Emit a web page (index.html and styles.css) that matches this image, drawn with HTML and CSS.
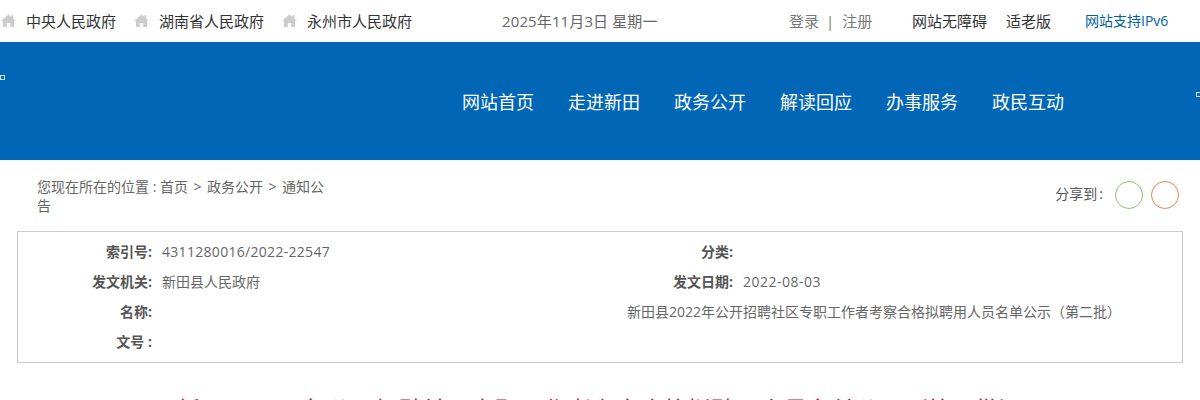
FILE: index.html
```html
<!DOCTYPE html>
<html lang="zh-CN">
<head>
<meta charset="utf-8">
<title>新田县2022年公开招聘社区专职工作者考察合格拟聘用人员名单公示（第二批）</title>
<link rel="stylesheet" href="styles.css">
</head>
<body>
<header class="topbar">
  <nav class="gov-links">
    <a class="gov-link"><svg class="home" viewBox="0 0 15 13"><path d="M7.5 0.5 L10.5 3.1 V1.2 H12.5 V4.9 L15 7.1 H13 V13 H9.2 V9 H5.8 V13 H2 V7.1 H0 Z"/></svg>中央人民政府</a>
    <a class="gov-link"><svg class="home" viewBox="0 0 15 13"><path d="M7.5 0.5 L10.5 3.1 V1.2 H12.5 V4.9 L15 7.1 H13 V13 H9.2 V9 H5.8 V13 H2 V7.1 H0 Z"/></svg>湖南省人民政府</a>
    <a class="gov-link"><svg class="home" viewBox="0 0 15 13"><path d="M7.5 0.5 L10.5 3.1 V1.2 H12.5 V4.9 L15 7.1 H13 V13 H9.2 V9 H5.8 V13 H2 V7.1 H0 Z"/></svg>永州市人民政府</a>
  </nav>
  <div class="date">2025年11月3日 星期一</div>
  <div class="login"><a>登录</a><span class="sep">|</span><a>注册</a></div>
  <a class="tool first">网站无障碍</a>
  <a class="tool">适老版</a>
  <a class="ipv6">网站支持IPv6</a>
</header>
<section class="banner">
  <span class="broken left"></span>
  <nav class="mainnav">
    <a>网站首页</a><a>走进新田</a><a>政务公开</a><a>解读回应</a><a>办事服务</a><a>政民互动</a>
  </nav>
  <span class="broken right"></span>
</section>
<main class="content">
  <div class="crumbrow">
    <div class="crumbs">您现在所在的位置 : 首页<span class="gt">&gt;</span>政务公开<span class="gt">&gt;</span>通知公告</div>
    <div class="share">
      <span class="share-label">分享到<span class="colon">:</span></span>
      <span class="circle green"></span>
      <span class="circle orange"></span>
    </div>
  </div>
  <div class="meta">
    <div class="meta-row">
      <div class="cell"><b>索引号:</b><span class="num">4311280016/2022-22547</span></div>
      <div class="cell"><b>分类:</b></div>
    </div>
    <div class="meta-row">
      <div class="cell"><b>发文机关:</b><span>新田县人民政府</span></div>
      <div class="cell"><b>发文日期:</b><span class="num wide">2022-08-03</span></div>
    </div>
    <div class="meta-row">
      <div class="cell"><b>名称:</b></div>
      <div class="cell name-value">新田县2022年公开招聘社区专职工作者考察合格拟聘用人员名单公示（第二批）</div>
    </div>
    <div class="meta-row">
      <div class="cell"><b>文号 :</b></div>
    </div>
  </div>
  <h1 class="title">新田县2022年公开招聘社区专职工作者考察合格拟聘用人员名单公示（第二批）</h1>
</main>
</body>
</html>
```
FILE: styles.css
```css
* { box-sizing: border-box; }
html, body { margin: 0; padding: 0; height: 400px; overflow: hidden; background: #fff; }
body { font-family: "Open Sans", "Noto Sans CJK SC", sans-serif; color: #333; }
a { color: inherit; text-decoration: none; }

.topbar { display: flex; align-items: center; height: 42px; padding-bottom: 2px; font-size: 15px; color: #333; white-space: nowrap; }
.gov-links { display: flex; width: 412px; flex: none; padding-left: 1px; }
.gov-link { display: flex; align-items: center; margin-right: 18px; }
.home { width: 15px; height: 13px; margin-right: 10px; fill: #ccc; }
.date { width: 287px; flex: none; margin-left: 90px; color: #666; letter-spacing: .12px; }
.login { width: 123px; flex: none; color: #777; }
.sep { margin: 0 8px 0 7px; }
.tool { margin-right: 19px; }
.ipv6 { margin-left: 15px; font-size: 14px; color: #00629f; }

.banner { position: relative; height: 118px; background: #0066b5; }
.mainnav { display: flex; gap: 34px; padding: 47px 0 0 462px; font-size: 18px; line-height: 26px; color: #fff; }
.broken { position: absolute; width: 5px; height: 5px; border: 1px solid #cfe0ee; }
.broken.left { left: 0; top: 33px; }
.broken.right { right: -1px; top: 50px; }

.content { padding: 0 17px; border-top: 1px solid #eafafd; }
.crumbrow { display: flex; justify-content: space-between; height: 70px; padding: 16px 0 0 20px; }
.crumbs { width: 300px; font-size: 14px; line-height: 19px; color: #666; }
.gt { margin: 0 5.5px; }
.share { display: flex; align-items: flex-start; padding: 4px 4px 0 0; font-size: 14px; color: #555; }
.share-label { line-height: 26px; margin-right: 12px; }
.colon { margin-left: 2px; }
.circle { width: 28px; height: 28px; border-radius: 50%; border: 1px solid; margin-right: 8px; }
.circle:last-child { margin-right: 0; }
.green { border-color: #8bc46f; }
.orange { border-color: #ee8052; }

.meta { height: 132px; border: 1px solid #ccc; padding: 4px 0 6px; font-size: 14px; color: #666; }
.meta-row { display: grid; grid-template-columns: 581px 1fr; height: 30px; }
.cell { display: flex; align-items: center; }
.cell b { width: 134px; text-align: right; margin-right: 10px; color: #555; font-weight: 700; }
.num { letter-spacing: .3px; }
.num.wide { letter-spacing: .5px; }
.name-value { justify-content: flex-end; padding-right: 67px; margin-right: -6px; }

.title { margin: 31px 0 0; text-align: center; font-size: 24px; line-height: 32px; font-weight: 400; color: #c8102e; white-space: nowrap; }
```
